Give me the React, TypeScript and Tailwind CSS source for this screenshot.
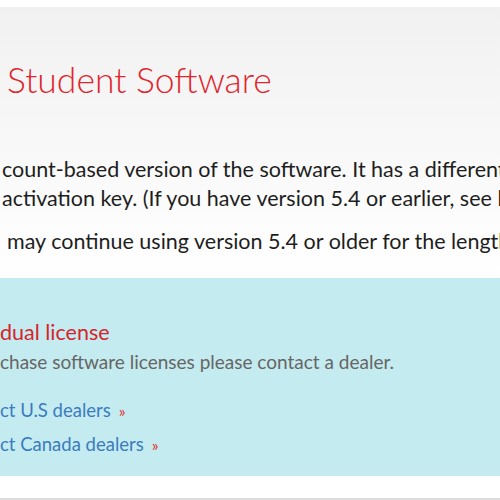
export default function App() {
  return (
    <div className="h-[500px] w-[500px] overflow-hidden bg-white font-['Lato','Noto_Sans',sans-serif]">
      {/* Hero with light gradient */}
      <section className="mt-[7px] h-[271px] bg-gradient-to-b from-[#f1f1f1] to-white">
        <h1 className="whitespace-nowrap pl-[7px] pt-[51px] text-[35.5px] font-light leading-[44px] text-[#e2242c]">
          Student Software
        </h1>
        <div className="mt-[53px] whitespace-nowrap pl-[2px] text-[21.5px] leading-[29px] text-[#1e1e1e]">
          <p>count-based version of the software. It has a different</p>
          <p>activation key. (If you have version 5.4 or earlier, see how</p>
          <p className="mt-[14px] pl-[5px]">may continue using version 5.4 or older for the length</p>
        </div>
      </section>

      {/* Dealer box */}
      <section className="h-[198px] bg-[#c4ebef] pt-[40px]">
        <h2 className="whitespace-nowrap text-[21.5px] leading-[28px] text-[#d7242c]">
          dual license
        </h2>
        <p className="mt-[3px] whitespace-nowrap text-[19px] leading-[26px] text-[#666]">
          chase software licenses please contact a dealer.
        </p>
        <ul className="mt-[22px] space-y-[7px] whitespace-nowrap text-[18.5px] leading-[26px] text-[#3b7cbf]">
          <li>
            <a href="#">ct U.S dealers</a>
            <span className="ml-[8px] text-[16px] text-[#e0312f]">»</span>
          </li>
          <li>
            <a href="#">ct Canada dealers</a>
            <span className="ml-[8px] text-[16px] text-[#e0312f]">»</span>
          </li>
        </ul>
      </section>

      <div className="h-[22px] bg-white" />
      <div className="h-[2px] bg-[#dcdcdc]" />
    </div>
  )
}
